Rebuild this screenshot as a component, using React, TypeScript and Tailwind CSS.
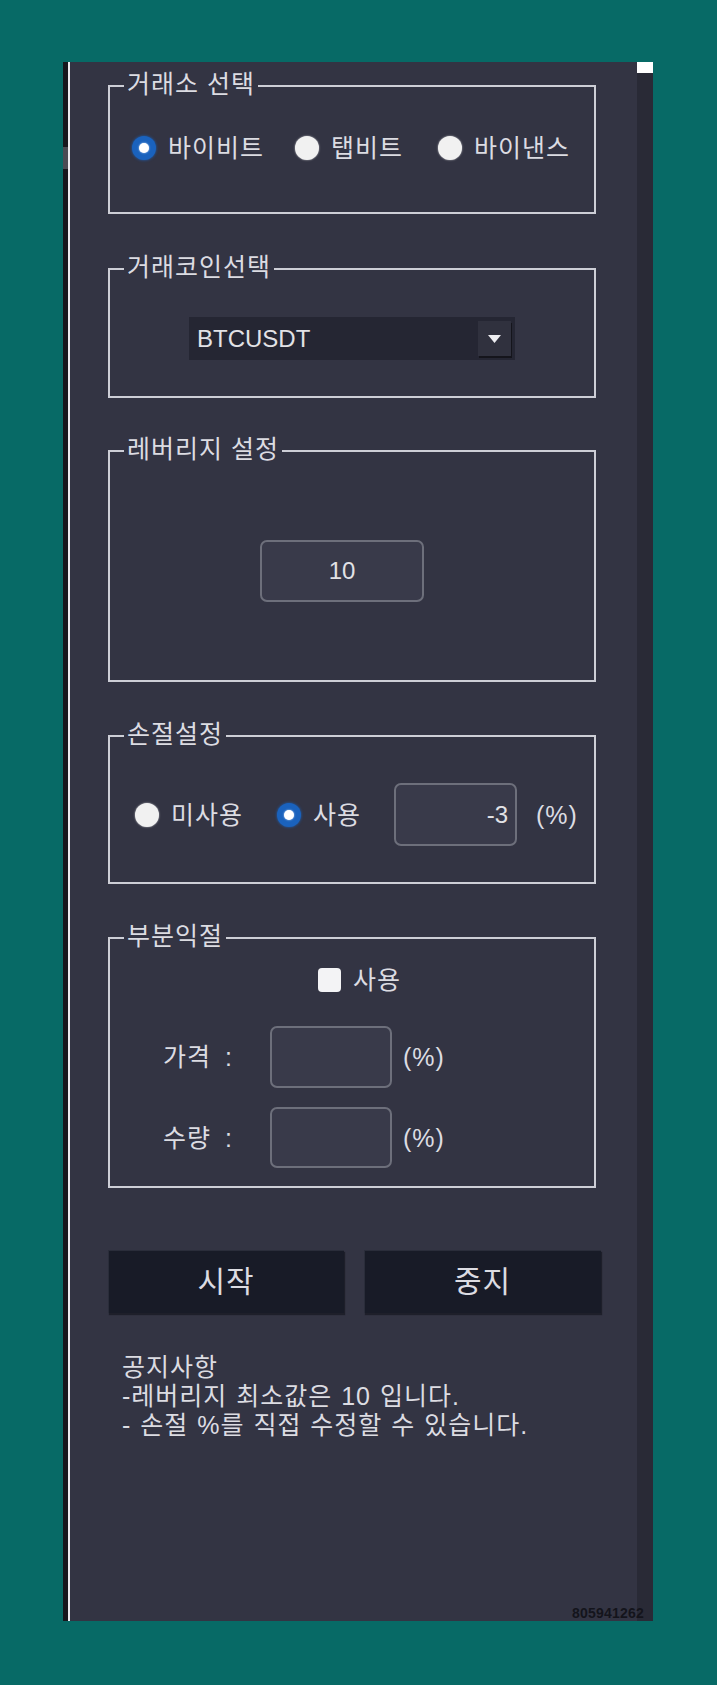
import React from 'react';

const font = { fontFamily: '"Liberation Sans", "Noto Sans CJK KR", sans-serif' };

function Group({ title, className, children }: { title: string; className?: string; children: React.ReactNode }) {
  return (
    <fieldset className={`w-[488px] border-2 border-[#cdced6] ${className ?? ''}`}>
      <legend className="ml-[14px] px-[3px] pb-[4px] text-[25px] leading-[24px] tracking-[1px] text-[#dcdce2]">{title}</legend>
      {children}
    </fieldset>
  );
}

function Radio({ checked }: { checked?: boolean }) {
  if (checked) {
    return (
      <span className="flex h-[24px] w-[24px] shrink-0 items-center justify-center rounded-full bg-[#1a62bd] shadow-[0_0_3px_#1a62bd]">
        <span className="block h-[10px] w-[10px] rounded-full bg-white shadow-[0_0_2px_#cfe3ff]" />
      </span>
    );
  }
  return <span className="block h-[24px] w-[24px] shrink-0 rounded-full bg-[#f1f1f1] shadow-[0_0_2px_rgba(255,255,255,0.7)]" />;
}

function Field({ value, className, align }: { value?: string; className: string; align?: 'center' | 'right' }) {
  return (
    <div
      className={`flex items-center rounded-[7px] border-2 border-[#6d6f7b] bg-[#393a4a] text-[24px] text-[#e2e2e6] ${
        align === 'right' ? 'justify-end pr-[7px]' : 'justify-center'
      } ${className}`}
    >
      {value}
    </div>
  );
}

export default function App() {
  return (
    <div className="min-h-[1685px] bg-[#076a66] pl-[63px] pt-[62px]" style={font}>
      <div className="relative flex h-[1559px] w-[590px] bg-[#333443] text-[#dcdce2]">
        {/* window edge */}
        <div className="flex w-[5px] flex-col bg-[#17171d]">
          <div className="mt-[85px] h-[22px] bg-[#4a4b53]" />
        </div>
        <div className="w-[2px] bg-[#ececf0]" />

        <main className="flex-1 pl-[38px] pt-[10px]">
          {/* 거래소 선택 */}
          <Group title="거래소 선택">
            <div className="h-[112px] pt-[35px]">
              <div className="flex h-[26px] items-center pl-[22px] text-[25px] leading-[26px] tracking-[1px]">
                <Radio checked />
                <span className="ml-[12px]">바이비트</span>
                <span className="ml-[31px] flex">
                  <Radio />
                </span>
                <span className="ml-[12px]">탭비트</span>
                <span className="ml-[35px] flex">
                  <Radio />
                </span>
                <span className="ml-[12px]">바이낸스</span>
              </div>
            </div>
          </Group>

          {/* 거래코인선택 */}
          <Group title="거래코인선택" className="mt-[41px]">
            <div className="h-[113px] pt-[34px]">
              <div className="mx-auto flex h-[43px] w-[326px] items-center justify-between bg-[#252633] pl-[8px] pr-[4px]">
                <span className="text-[24px] leading-[24px] text-[#e2e2e6]">BTCUSDT</span>
                <span className="flex h-[35px] w-[33px] items-center justify-center bg-[#30313e] shadow-[1px_2px_0_#15151c]">
                  <svg width="13" height="8" viewBox="0 0 13 8">
                    <path d="M0 0h13L6.5 8z" fill="#eeeef2" />
                  </svg>
                </span>
              </div>
            </div>
          </Group>

          {/* 레버리지 설정 */}
          <Group title="레버리지 설정" className="mt-[39px]">
            <div className="h-[215px] pt-[75px]">
              <Field value="10" className="ml-[150px] h-[62px] w-[164px]" />
            </div>
          </Group>

          {/* 손절설정 */}
          <Group title="손절설정" className="mt-[40px]">
            <div className="h-[132px] pt-[33px]">
              <div className="flex h-[63px] items-center pl-[25px] text-[25px] leading-[26px] tracking-[1px]">
                <Radio />
                <span className="ml-[12px]">미사용</span>
                <span className="ml-[34px] flex">
                  <Radio checked />
                </span>
                <span className="ml-[12px]">사용</span>
                <Field value="-3" align="right" className="ml-[33px] h-[63px] w-[123px] tracking-normal" />
                <span className="ml-[19px]">(%)</span>
              </div>
            </div>
          </Group>

          {/* 부분익절 */}
          <Group title="부분익절" className="mt-[40px]">
            <div className="h-[234px] pt-[16px] text-[25px] leading-[26px] tracking-[1px]">
              <div className="flex h-[24px] items-center pl-[208px]">
                <span className="block h-[24px] w-[23px] rounded-[4px] bg-[#f3f3f5]" />
                <span className="ml-[12px]">사용</span>
              </div>
              <div className="mt-[34px] flex items-center pl-[53px]">
                <span className="w-[107px] [word-spacing:6px]">가격 :</span>
                <Field className="h-[62px] w-[122px]" />
                <span className="ml-[11px]">(%)</span>
              </div>
              <div className="mt-[19px] flex items-center pl-[53px]">
                <span className="w-[107px] [word-spacing:6px]">수량 :</span>
                <Field className="h-[61px] w-[122px]" />
                <span className="ml-[11px]">(%)</span>
              </div>
            </div>
          </Group>

          {/* buttons */}
          <div className="mt-[62px] flex gap-[20px]">
            <button className="h-[63px] w-[236px] bg-[#181b27] text-[30px] tracking-[1px] text-[#dcdce2] shadow-[inset_1px_1px_0_#2a2d3a,1px_2px_1px_#1e1f2a]">
              시작
            </button>
            <button className="h-[63px] w-[237px] bg-[#181b27] text-[30px] tracking-[1px] text-[#dcdce2] shadow-[inset_1px_1px_0_#2a2d3a,1px_2px_1px_#1e1f2a]">
              중지
            </button>
          </div>

          {/* notice */}
          <div className="ml-[14px] mt-[40px] text-[25px] leading-[29px] tracking-[1px] [word-spacing:1px]">
            <p>공지사항</p>
            <p>-레버리지 최소값은 10 입니다.</p>
            <p>- 손절 %를 직접 수정할 수 있습니다.</p>
          </div>
        </main>

        {/* scrollbar */}
        <div className="w-[16px] bg-[#292a36]">
          <div className="h-[11px] bg-white" />
        </div>

        <span className="absolute bottom-[1px] right-[9px] text-[14px] font-bold leading-[14px] tracking-[0.2px] text-[#14141c]">
          805941262
        </span>
      </div>
    </div>
  );
}
